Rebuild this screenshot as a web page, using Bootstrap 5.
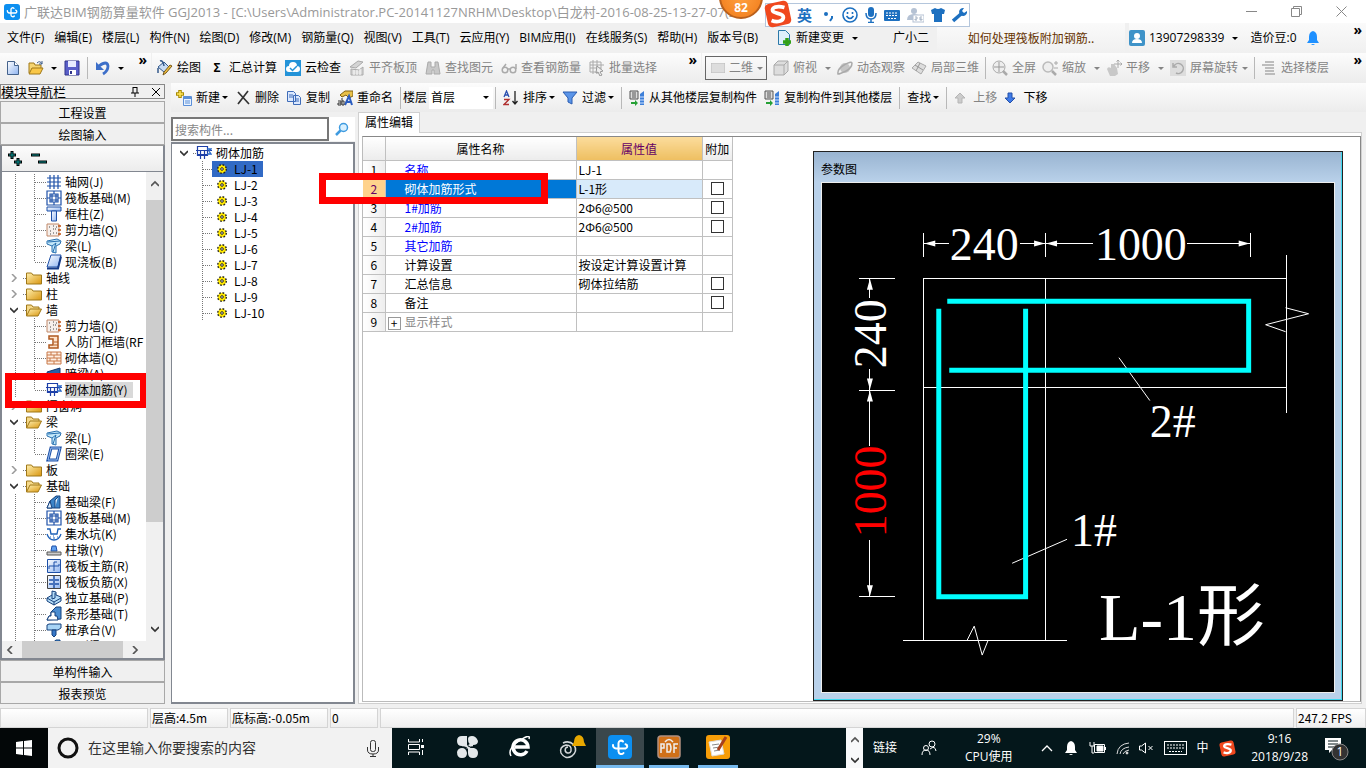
<!DOCTYPE html>
<html lang="zh-CN">
<head>
<meta charset="utf-8">
<meta name="viewport" content="width=device-width, initial-scale=1">
<title>广联达BIM钢筋算量软件 GGJ2013</title>
<link href="https://cdn.jsdelivr.net/npm/bootstrap@5.3.0/dist/css/bootstrap.min.css" rel="stylesheet">
<style>
:root{--ui:"Open Sans","Noto Sans CJK SC",sans-serif;--song:"Noto Sans CJK SC",sans-serif;--dots:repeating-linear-gradient(#777 0 1px,transparent 1px 2px);--dotsx:repeating-linear-gradient(90deg,#777 0 1px,transparent 1px 2px)}
body{height:100vh;font:12px/16px var(--ui);color:#000;background:#f0f0f0;overflow:hidden}
svg{display:block;flex:none}
.ic{width:16px;height:16px}
a{color:inherit;text-decoration:none}
.titlebar{height:23px;background:#fff;color:#999}
.titletext{font-size:13px;white-space:nowrap;flex:none}
.wctl{gap:34px;padding-right:19px}
.bare{border:0;background:none;padding:0;color:inherit;font:inherit;display:inline-flex;align-items:center;flex:none;border-radius:0}
.orb{width:44px;height:44px;left:719px;top:-25px;border-radius:50%;background:radial-gradient(#ffa040,#f07a18);border:2px solid #b9601c;color:#fff;font:bold 12px/18px var(--ui);z-index:3}
.ime{left:765px;top:3px;width:205px;height:24px;background:#fff;border:1px solid #b4c6dc;z-index:2;color:#1d70c0;padding-left:31px;gap:7px}
.ime b{font-size:15px;margin-right:2px}
.imelogo{position:absolute;left:-2px;top:-4px}
.menubar{height:30px}
.menus{gap:10px;padding-left:7px;width:937px}
.band{background:linear-gradient(#fafafa,#f0f0f0)}
.news{width:188px;color:#630;font-family:var(--song)}
.toolbar1{height:30px;gap:1px}
.tb{background:linear-gradient(#fcfcfc,#ececec)}
.tbx{gap:4px;line-height:16px;font-size:12px;white-space:nowrap}
.tbx:disabled{color:#848484;opacity:1;border:0}
.caret{width:0;height:0;border:3px solid transparent;border-top-color:currentColor;border-bottom:0;flex:none}
.vsep{width:1px;height:22px;background:#b8b8b8;flex:none}
.more{font:bold 14px/14px var(--ui);align-self:flex-start;padding-right:4px;color:#000}
.viewbox{width:62px;height:24px;border:1px solid #666;color:#848484;padding:0 5px;gap:4px;white-space:nowrap}
.toolbar2{height:29px;gap:7px;padding-left:5px;margin-left:6px}
.toolbar2 .tbx .caret{margin-left:-2px}
.floor{width:64px;height:22px;border:0;background:#fff;appearance:none;padding:0 2px;font:12px/20px var(--ui)}
.dock{width:165px}
.dockhead{height:15px;border:1px solid #888;font:13px/12px var(--song);margin:1px 0 2px}
.dockbtn{height:22px;border:1px solid #fff;border-right-color:#999;border-bottom-color:#999;border-radius:0;padding:0;font:12px/19px var(--song);background:#f0f0f0;width:100%;flex:none;outline:1px solid #a8a8a8;outline-offset:-1px}
.navbox{border:2px solid #828790;border-top:1px solid #999;background:#fff;min-height:0}
.navtools{height:26px;border-bottom:1px solid #828790;gap:8px;padding-left:5px;background:linear-gradient(#fcfcfc,#ececec)}
.tree{font:12px/16px var(--song);margin:0;padding:2px 0 0;list-style:none;min-height:0}
.tree li{height:16px;display:flex;align-items:center;white-space:nowrap;gap:3px;position:relative}
.tree .lf{padding-left:44px;background:var(--dots) 13px 0/1px 100% no-repeat,var(--dots) 32px 0/1px 100% no-repeat,var(--dotsx) 33px 8px/11px 1px no-repeat}
.tree .endrow{background:var(--dots) 13px 0/1px 100% no-repeat,var(--dots) 32px 0/1px 8px no-repeat,var(--dotsx) 33px 8px/11px 1px no-repeat}
.tree .fd{padding-left:8px;gap:4px;background:var(--dotsx) 21px 8px/4px 1px no-repeat}
.fd .chev{margin-right:4px}
.chev{width:8px;height:8px}
.picked{background:#d9d9d9;padding-right:5px}
.callout1{border:7px solid red;position:absolute;z-index:4;pointer-events:none}
.mark-nav{left:3px;top:-9px;width:142px;height:35px}
.mark-row{left:-44px;top:-7px;width:229px;height:31px;background:linear-gradient(90deg,#fff 37px,transparent 37px)}
.sbar{width:17px;background:#f0f0f0}
.thumb{background:#cdcdcd}
.comp{width:184px;margin:0 3px 0 6px}
.searchrow{padding:5px 0 1px}
.searchbox{border:2px solid #777;border-radius:0;padding:0 2px;font:12px/20px var(--song);height:24px;width:158px}
.searchbox::placeholder{color:#888}
.complist{border:1px solid #828790;border-top-width:2px;border-right-width:2px;border-bottom-width:2px;background:#fff}
.complist .tree{padding-top:1px}
.cl{padding-left:43px;background:var(--dots) 30px 0/1px 100% no-repeat,var(--dotsx) 31px 8px/10px 1px no-repeat}
.cl svg{width:12px;height:12px}
.cl a{display:flex;gap:6px;align-items:center;padding:0 5px 0 4px;margin-left:-3px}
.cl.on a{background:#316ac5}
.ptab{height:21px;width:62px;background:#fff;border:1px solid #d0d0d0;border-bottom:0;font-size:12px;padding-left:6px;margin-bottom:-1px;z-index:1;position:relative}
.page{background:#fff;border:1px solid #d0d0d0;padding:3px 0 1px 3px;margin-right:4px;min-height:0}
.inner{border:1px solid #888;border-left-color:#bbb;border-bottom-color:#bbb}
.props{width:370px;table-layout:fixed;border-collapse:collapse;font:12px/17px var(--song);flex:none;align-self:flex-start}
.props td,.props th{border:1px solid #c0c0c0;border-left-width:0;height:19px;padding:0 2px;white-space:nowrap;font-weight:400}
.props thead th{height:23px;text-align:center;border-top:0;background:linear-gradient(#fff,#ececec);padding:0}
.props thead th.hot{background:linear-gradient(#fbdc9c,#eebf61);color:#606}
.props tbody th{text-align:center;background:linear-gradient(90deg,#fff,#eee);padding:0}
.props td:nth-child(2){padding-left:19px}
.props td:last-child{text-align:center}
.props .blue{color:#00f}
.props .faint{color:#888}
.props .cur td:nth-child(2){background:#0078d7;color:#fff}
.props .cur td:nth-child(3){background:#d8eafa}
.props .cur th{background:#ffd28c;color:#606}
.tick{appearance:none;width:13px;height:13px;border:1px solid #333;background:#fff;display:block;margin:0 auto}
.plus{border:1px solid #999;width:13px;height:13px;line-height:10px;text-align:center;display:inline-block;margin:0 4px 0 -17px;vertical-align:middle}
.pwin{flex:0 0 530px;margin:14px 17px 0 auto;border:1px solid #222;background:linear-gradient(#99b4d1,#b9d1ea 30px);box-shadow:inset -1px -1px #3fd8f0;padding:0 7px 7px 7px}
.pwin h2{font:12px/16px var(--ui);margin:0;padding:10px 0 4px}
.canvas{background:#000;border:1px solid #eee;min-height:0}
.canvas svg{width:100%;height:100%}
.status{height:20px;gap:2px;font:12px/16px var(--song);background:#f0f0f0}
.cell{border:1px solid #d4d4d4;background:linear-gradient(#fff,#efefef);padding:1px 1px 0;white-space:nowrap}
.taskbar{height:40px;background:#04171b;color:#fff}
.start{width:48px;background:#030708;justify-content:center}
.wsearch{width:344px;background:#f2f2f2;color:#222;padding:0 12px 0 9px;gap:9px}
.wsearch input{border:0;background:none;font:14px/20px var(--ui);min-width:0;padding:0}
.wsearch input::placeholder{color:#333;opacity:1}
.app{width:48px;height:40px;justify-content:center;border-bottom:3px solid transparent}
.app.run{border-color:#76b9ed;width:40px;margin:0 4px 0 5px}
.app.act{background:#3a474b;border-color:#76b9ed}
.tray{gap:10px}
.two{line-height:18px;text-align:center}
</style>
</head>
<body class="d-flex flex-column">
<svg width="0" height="0" class="position-absolute" aria-hidden="true">
<defs>
<linearGradient id="gy" x1="0" y1="0" x2="1" y2="1"><stop offset="0" stop-color="#fff0b0"/><stop offset="1" stop-color="#d9960f"/></linearGradient>
<linearGradient id="gb" x1="0" y1="0" x2="1" y2="1"><stop offset="0" stop-color="#fff"/><stop offset="1" stop-color="#8fb4f0"/></linearGradient>
</defs>
<symbol id="logo" viewBox="0 0 24 24"><rect width="24" height="24" rx="4" fill="#0c8ff0"/><path d="M15 6.500a2.600 2.600 0 0 0-4.500 1.500v8.500a2.800 2.800 0 0 0 5 1.500M5 10a3.200 3.200 0 0 0 3 3.500h9.500a2.200 2.200 0 0 0 0-4.300" fill="none" stroke="#fff" stroke-width="2" stroke-linecap="round"/></symbol>
<symbol id="sogou" viewBox="0 0 26 26"><rect x="2" y="2" width="22" height="22" rx="4" fill="#f0481e" transform="rotate(-12 13 13)"/><path d="M19 7C12 5 7 7 8 10s10 2 10 6-6 5-11 3" fill="none" stroke="#fff" stroke-width="3.500"/></symbol>
<symbol id="new" viewBox="0 0 16 16"><path d="M2.500 1.500h7l4 4v9h-11z" fill="url(#gb)" stroke="#44628c"/><path d="M9.500 1.500v4h4" fill="#fff" stroke="#44628c"/></symbol>
<symbol id="open" viewBox="0 0 16 16"><path d="M1 13V3h5l1 2h6v3" fill="#f5d471" stroke="#a07818"/><path d="M1 14l3-6h11l-3 6z" fill="#f9c748" stroke="#a07818"/><path d="M9 3q3-3 5 1m0-3v3h-3" fill="none" stroke="#3d5c8a"/></symbol>
<symbol id="save" viewBox="0 0 16 16"><path d="M1 1h14v14H1z" fill="#5a5fc8" stroke="#31358a"/><path d="M4 1h8v6H4z" fill="#e8ecff"/><path d="M5 10h7v5H5z" fill="#fff"/><path d="M6 11h2v3H6z" fill="#31358a"/></symbol>
<symbol id="undo" viewBox="0 0 16 16"><path d="M4 6q8-6 9 0 0 5-5 8" fill="none" stroke="#3d6fc9" stroke-width="2.800"/><path d="M1 2v8h8z" fill="#3d6fc9"/></symbol>
<symbol id="paint" viewBox="0 0 16 16"><path d="M1 7l6-5 6 6-6 4z" fill="#c8dcf5" stroke="#345a8c"/><path d="M3 1q3-1 4 5M1 8v5" fill="none" stroke="#345a8c" stroke-width="1.500"/><path d="M15 6l-6 7-3 2 1-3 6-7z" fill="#f0c040" stroke="#78581a"/></symbol>
<symbol id="cloud" viewBox="0 0 16 16"><rect width="16" height="16" fill="#2393d8"/><path d="M4 12a3 3 0 0 1 0-6 4 4 0 0 1 8 0 3 3 0 0 1 0 6z" fill="#fff"/><path d="M5 8l2.500 2.500L12 6" fill="none" stroke="#2393d8" stroke-width="1.500"/></symbol>
<symbol id="align" viewBox="0 0 16 16"><path d="M1 7l8-6 5 1-7 6zM2 9v6h12V7l-4 3z" fill="#d4d4d4" stroke="#aaa"/><path d="M5 10v5M8 10v5M11 9v6" stroke="#fff"/></symbol>
<symbol id="bino" viewBox="0 0 16 16"><path d="M3 2h3v5h4V2h3l2 12H9v-4H7v4H1z" fill="#c8c8c8" stroke="#aaa"/></symbol>
<symbol id="glass" viewBox="0 0 16 16"><g fill="none" stroke="#aaa" stroke-width="1.500"><circle cx="4" cy="10" r="2.800"/><circle cx="12" cy="10" r="2.800"/><path d="M7 9h2M2 8l3-4M15 9V4"/></g></symbol>
<symbol id="batch" viewBox="0 0 16 16"><path d="M1 2h11v10H1zM1 5h14M1 8h11M4 0v14M8 0v14" fill="none" stroke="#aaa"/><path d="M8 6l6 5-3 1 2 3-2 1-2-4-2 1z" fill="#eee" stroke="#999"/></symbol>
<symbol id="cube" viewBox="0 0 16 16"><path d="M1 5l4-4h10v10l-4 4H1zM1 5h10v10M11 5l4-4" fill="#ddd" stroke="#aaa"/></symbol>
<symbol id="orbit" viewBox="0 0 16 16"><circle cx="8" cy="8" r="5" fill="#c5c5c5"/><path d="M1 14Q0 9 7 5t8-2q0 5-6 8t-8 3z" fill="none" stroke="#aaa" stroke-width="1.500"/></symbol>
<symbol id="part" viewBox="0 0 16 16"><path d="M1 8l6-6 8 4-5 8z" fill="#ddd" stroke="#aaa"/><path d="M4 5l8 5M9 3L5 11" stroke="#999"/></symbol>
<symbol id="full" viewBox="0 0 16 16"><circle cx="7" cy="7" r="6" fill="#eee" stroke="#aaa"/><path d="M7 2v10M2 7h10" stroke="#999"/><path d="M11 11l4 4" stroke="#aaa" stroke-width="2.500"/></symbol>
<symbol id="zoomg" viewBox="0 0 16 16"><circle cx="6" cy="7" r="5" fill="#eee" stroke="#bbb" stroke-width="1.500"/><path d="M10 11l4 4" stroke="#aaa" stroke-width="2.500"/><path d="M12 3h4M14 1v4M12 8h4" stroke="#aaa"/></symbol>
<symbol id="pan" viewBox="0 0 16 16"><path d="M1 9q1-3 4-1V4h3l3 4 1 6-3 2H4z" fill="#c8c8c8"/><path d="M12 0v8M8 4h8M10.500 1.500L12 0l1.500 1.500M14.500 2.500L16 4l-1.500 1.500" fill="none" stroke="#aaa"/></symbol>
<symbol id="rot" viewBox="0 0 16 16"><rect width="16" height="16" fill="#ddd"/><path d="M4 6a5 5 0 1 1 2 7M3 3v4h4" fill="none" stroke="#aaa" stroke-width="1.500"/></symbol>
<symbol id="layers" viewBox="0 0 16 16"><path d="M4 2h9M1 5h12M4 8h9M4 11h9M4 14h10" stroke="#aaa" stroke-width="1.500"/></symbol>
<symbol id="add" viewBox="0 0 16 16"><path d="M4 0v8M0 4h8" stroke="#a88a00" stroke-width="3.500"/><path d="M4 1v6M1 4h6" stroke="#ffe658" stroke-width="1.500"/><path d="M7.500 6.500h8v9h-8z" fill="#e8f2ff" stroke="#5a8fd8"/><path d="M8 8h7" stroke="#5a8fd8" stroke-width="2"/><path d="M9 11h5M9 13h5" stroke="#5a8fd8"/></symbol>
<symbol id="del" viewBox="0 0 16 16"><path d="M3 2l11 12M13 1L3 14" stroke="#333" stroke-width="1.700"/></symbol>
<symbol id="copy" viewBox="0 0 16 16"><path d="M1.500 1.500h6l2 2v8h-8zM7.500 5.500h5l2 2v7h-7z" fill="#dce9ff" stroke="#3f6cb8"/><path d="M3 5h4M3 7h4M9 9h4M9 11h4" stroke="#3f6cb8"/></symbol>
<symbol id="ren" viewBox="0 0 16 16"><path d="M3 5l5-4 8 0v5l-4 2-3-3-4 2z" fill="#e8c048" stroke="#806010"/><path d="M8 15l4-9 3 9M9 12h5" fill="none" stroke="#2a5cc0" stroke-width="2"/><path d="M1 11h3v4H1v-2h3M5 8v7h2v-4H5" fill="none" stroke="#333"/></symbol>
<symbol id="az" viewBox="0 0 16 16"><path d="M1 7l2.500-6L6 7M2 5h3" fill="none" stroke="#2a4fb0" stroke-width="1.300"/><path d="M1 9.500h5l-5 5h5" fill="none" stroke="#b03030" stroke-width="1.300"/><path d="M12 1v12M9.500 11l2.500 3 2.500-3" fill="none" stroke="#222" stroke-width="1.300"/></symbol>
<symbol id="funnel" viewBox="0 0 16 16"><path d="M1 2h14l-5 6v6l-4-2V8z" fill="#5a94e8" stroke="#2a5cb0"/></symbol>
<symbol id="bld" viewBox="0 0 16 16"><path d="M1 1h8v8H1z" fill="#ddd" stroke="#555"/><path d="M3 3h4M3 5h4M3 7h4" stroke="#555"/><path d="M11 4l4-3v14h-4z" fill="#3d7fd8"/><path d="M11 7h4M11 10h4M11 13h4" stroke="#cfe2ff"/><path d="M2 12h4v-2l3 3-3 3v-2H2z" fill="#25a035"/></symbol>
<symbol id="up" viewBox="0 0 12 12"><path d="M6 1l5 5H8v5H4V6H1z" fill="#ccc" stroke="#b5b5b5"/></symbol>
<symbol id="down" viewBox="0 0 12 12"><path d="M6 11l5-5H8V1H4v5H1z" fill="#3f7be8" stroke="#2450a8"/></symbol>
<symbol id="pgreen" viewBox="0 0 16 16"><path d="M2.500.5h7l4 4v10h-11z" fill="#dff0fb" stroke="#2a78a8"/><path d="M11 8v8M7 12h8" stroke="#32a018" stroke-width="3.500"/></symbol>
<symbol id="user" viewBox="0 0 16 16"><rect width="16" height="16" rx="2" fill="#3f93c8"/><circle cx="8" cy="6" r="3" fill="#fff"/><path d="M3 13q0-4 5-4t5 4z" fill="#fff"/></symbol>
<symbol id="bell" viewBox="0 0 16 16"><path d="M8 1q4 1 4 6v3l2 3H2l2-3V7q0-5 4-6zM6 14h4q-2 2-4 0z" fill="currentColor"/></symbol>
<symbol id="grid" viewBox="0 0 16 16"><path d="M1 4h14M1 8h14M1 12h14M4 1v14M8 1v14M12 1v14" stroke="#1d50a8" stroke-width="1.200"/></symbol>
<symbol id="raft" viewBox="0 0 16 16"><path d="M1 1h14v14H1zM4 4h8v8H4zM6 4v8M10 4v8M4 6h8M4 10h8M8 1v3M8 12v3M1 8h3M12 8h3" fill="none" stroke="#1d50a8" stroke-width="1.200"/></symbol>
<symbol id="colm" viewBox="0 0 16 16"><path d="M1 1h14v4H1z" fill="url(#gb)" stroke="#1d50a8"/><path d="M5.500 5h5v10h-5z" fill="url(#gb)" stroke="#1d50a8"/></symbol>
<symbol id="swall" viewBox="0 0 16 16"><path d="M1 2h12v12H1z" fill="#f6f0ec" stroke="#c08868"/><path d="M3 5h1M7 4h1M9 7h1M4 9h1M7 11h1M4 12h1M7 7h1M10 11h1M10 5h1" stroke="#444"/><path d="M12 4h3M12 8h3M12 12h3" stroke="#c05010" stroke-width="1.500"/></symbol>
<symbol id="beam" viewBox="0 0 16 16"><path d="M1 3l10-2 4 2-1 3-4 2v7l-4-1V8L1 6zM10 5L6 8" fill="#c4e8fa" stroke="#2870b0"/><path d="M2 4l12-1M7 14l3-9" stroke="#2870b0"/></symbol>
<symbol id="slab" viewBox="0 0 16 16"><path d="M5 1h10l-3 12H1z" fill="url(#gb)" stroke="#1d50a8"/><path d="M1 14.500h11l3-12" fill="none" stroke="#143a88" stroke-width="2"/></symbol>
<symbol id="ring" viewBox="0 0 16 16"><path d="M5 2h9l-3 12H2z" fill="#fff" stroke="#1d50a8" stroke-width="3"/><path d="M5 2h9l-3 12H2z" fill="none" stroke="#9cc0f0"/></symbol>
<symbol id="fold" viewBox="0 0 16 16"><path d="M.5 14V3h5l1.500 2h8.500v9z" fill="url(#gy)" stroke="#a07818"/></symbol>
<symbol id="foldo" viewBox="0 0 16 16"><path d="M.5 14V3h5l1.500 2h6v2" fill="#f5d98a" stroke="#a07818"/><path d="M.5 14L4 7h11.500L12 14z" fill="url(#gy)" stroke="#a07818"/></symbol>
<symbol id="door" viewBox="0 0 16 16"><path d="M3 2h9v12H3v-3h4V5H3z" fill="#ffe4cc" stroke="#b05a20" stroke-width="1.500"/><path d="M8 8h4M8 11h4" stroke="#b05a20"/></symbol>
<symbol id="brick" viewBox="0 0 16 16"><path d="M1 2h14v12H1zM1 5h14M1 8h14M1 11h14M5 2v3M11 2v3M8 5v3M4 8v3M11 8v3M8 11v3" fill="#ffefe2" stroke="#c87848"/></symbol>
<symbol id="dark" viewBox="0 0 16 16"><path d="M1 6l13-4v6L3 14z" fill="#2860a8" stroke="#123870"/></symbol>
<symbol id="tie" viewBox="0 0 16 16"><path d="M1.500 1.500h10v9h-10zM4.500 5v9M8.500 5v9M0 5.500h16M2 9.500h10" fill="none" stroke="#1d3fa8" stroke-width="1.200"/><path d="M11 4h4l-2 2 2 3h-4" fill="none" stroke="#2a68c8" stroke-width="1.300"/></symbol>
<symbol id="fbeam" viewBox="0 0 16 16"><path d="M1 14l3-7 6-5h4v12z" fill="#3c84c8" stroke="#15407c"/><path d="M1 14l3-7 2 7zM9 14V6l3-3" fill="#e0f0ff" stroke="#15407c"/></symbol>
<symbol id="sump" viewBox="0 0 16 16"><path d="M1 3h3l1 5h6l1-5h3M1 8q2 6 7 6t7-6" fill="none" stroke="#1d60b8" stroke-width="1.300"/><path d="M4 11h1M7 12h2M11 11h1M7 10h1" stroke="#1d60b8"/></symbol>
<symbol id="pier" viewBox="0 0 16 16"><path d="M5 9l1-5h4l1 5z" fill="#60a0f0" stroke="#1d50a8"/><path d="M1 10h14v3H1z" fill="#ccc" stroke="#555"/></symbol>
<symbol id="rein" viewBox="0 0 16 16"><path d="M1.500 1.500h13v13h-13z" fill="url(#gb)" stroke="#1d50a8"/><path d="M8 4v9M3 8h10V6M3 8v3M8 4h3" fill="none" stroke="#1d50a8"/></symbol>
<symbol id="rein2" viewBox="0 0 16 16"><path d="M1.500 1.500h13v13h-13z" fill="url(#gb)" stroke="#444"/><path d="M8 2v12M3 6h4M9 6h4M3 10h4M9 10h4" stroke="#1d50a8" stroke-width="1.500"/></symbol>
<symbol id="foot" viewBox="0 0 16 16"><path d="M1 8l5-3V1l4 1v3l5 2v4l-7 4-7-4z" fill="#b4dcf8" stroke="#15407c"/><path d="M1 8l7 4 7-4M8 12v3M6 5v4l3-1V3" fill="none" stroke="#15407c"/></symbol>
<symbol id="strip" viewBox="0 0 16 16"><path d="M1 14l2-4h2V6l5-5h5v12z" fill="#4a8cd0" stroke="#15407c"/><path d="M1 14l2-4h2V6h4v4h2l1 4z" fill="#fff" stroke="#15407c"/></symbol>
<symbol id="cap" viewBox="0 0 16 16"><path d="M1 3l2-1h12v4l-3 2H1z" fill="#a8d4f5" stroke="#15407c"/><path d="M6 8h4v5l-2 2-2-2z" fill="#3878c8" stroke="#15407c"/></symbol>
<symbol id="gear" viewBox="0 0 12 12"><circle cx="6" cy="6" r="4.300" fill="#ffe800" stroke="#222" stroke-width="1.400" stroke-dasharray="1.700 1.680"/><circle cx="6" cy="6" r="1.300" fill="#fff" stroke="#222"/></symbol>
<symbol id="cd" viewBox="0 0 8 8"><path d="M0 2l4 4 4-4" fill="none" stroke="#333" stroke-width="1.700"/></symbol>
<symbol id="cu" viewBox="0 0 8 8"><path d="M0 6l4-4 4 4" fill="none" stroke="#555" stroke-width="1.700"/></symbol>
<symbol id="cr" viewBox="0 0 8 8"><path d="M2 0l4 4-4 4" fill="none" stroke="#999" stroke-width="1.500"/></symbol>
<symbol id="crd" viewBox="0 0 8 8"><path d="M2 0l4 4-4 4" fill="none" stroke="#555" stroke-width="1.700"/></symbol>
<symbol id="clf" viewBox="0 0 8 8"><path d="M6 0L2 4l4 4" fill="none" stroke="#555" stroke-width="1.700"/></symbol>
</svg>

<header class="flex-shrink-0">
<div class="titlebar d-flex align-items-center position-relative">
<svg class="ic ms-1 me-1"><use href="#logo"/></svg>
<div class="titletext">广联达BIM钢筋算量软件 GGJ2013 - [C:\Users\Administrator.PC-20141127NRHM\Desktop\白龙村-2016-08-25-13-27-07(21</div>
<div class="orb position-absolute d-flex justify-content-center align-items-end">82</div>
<div class="ime position-absolute d-flex align-items-center">
<svg class="imelogo" width="28" height="28"><use href="#sogou"/></svg>
<b>英</b>
<svg width="14" height="16"><circle cx="5" cy="7" r="2" fill="#1d70c0"/><path d="M11 9v2l-2 3" stroke="#1d70c0" stroke-width="2" fill="none"/></svg>
<svg width="16" height="16" fill="none" stroke="#1d70c0" stroke-width="1.600"><circle cx="8" cy="8" r="7"/><path d="M4.500 9q3.500 5 7 0M5.500 5v2M10.500 5v2"/></svg>
<svg width="12" height="16"><rect x="3" y="0" width="6" height="10" rx="3" fill="#1d70c0"/><path d="M1 6q0 6 5 6t5-6M6 12v3M3 15.500h6" fill="none" stroke="#1d70c0" stroke-width="1.500"/></svg>
<svg width="16" height="16"><rect y="3" width="16" height="11" rx="1" fill="#1d70c0"/><path d="M2 6h12M2 8.500h12M4 11.500h8" stroke="#fff" stroke-dasharray="2 1"/></svg>
<svg width="17" height="16"><circle cx="7" cy="4" r="3" fill="#b5c2d4"/><path d="M0 13q0-6 7-6t7 6z" fill="#b5c2d4"/><rect x="6" y="8" width="11" height="7" fill="#fff" stroke="#b5c2d4"/><path d="M8 10h2v2H8v1h2M15 10h-2v3h2v-1h-2" fill="none" stroke="#a5b2c4"/></svg>
<svg width="14" height="16"><path d="M0 3l4-2q3 2 6 0l4 2-1 4h-2v8H3V7H1z" fill="#1d70c0"/></svg>
<svg width="15" height="16"><path d="M1 14L9 7" stroke="#1d70c0" stroke-width="3.500"/><path d="M12 1a4 4 0 1 0 3 3l-3 2-2-2z" fill="#1d70c0"/></svg>
</div>
<div class="wctl d-flex ms-auto align-items-center">
<button class="bare" aria-label="最小化"><svg width="11" height="11"><path d="M0 5.500h11" stroke="#888"/></svg></button>
<button class="bare" aria-label="还原"><svg width="11" height="11" fill="none" stroke="#888"><path d="M.5 2.500h8v8h-8zM2.500 2V.5h8v8H9"/></svg></button>
<button class="bare" aria-label="关闭"><svg width="11" height="11"><path d="M.5.5l10 10M10.500.5l-10 10" stroke="#888"/></svg></button>
</div>
</div>

<nav class="menubar d-flex">
<div class="menus d-flex align-items-center flex-shrink-0 text-nowrap">
<a href="#">文件(F)</a><a href="#">编辑(E)</a><a href="#">楼层(L)</a><a href="#">构件(N)</a><a href="#">绘图(D)</a><a href="#">修改(M)</a><a href="#">钢筋量(Q)</a><a href="#">视图(V)</a><a href="#">工具(T)</a><a href="#">云应用(Y)</a><a href="#">BIM应用(I)</a><a href="#">在线服务(S)</a><a href="#">帮助(H)</a><a href="#">版本号(B)</a>
<button class="bare tbx ms-2"><svg class="ic"><use href="#pgreen"/></svg>新建变更<span class="caret ms-1"></span></button>
<a href="#" class="ms-auto me-2">广小二</a>
</div>
<div class="news band d-flex align-items-center justify-content-center flex-shrink-0"><a href="#">如何处理筏板附加钢筋..</a></div>
<div class="band d-flex align-items-center flex-grow-1 ms-1">
<button class="bare tbx"><svg class="ic"><use href="#user"/></svg>13907298339<span class="caret mx-1"></span></button>
<span class="ms-2 me-2">造价豆:0</span>
<svg class="ic" style="color:#1e90ff"><use href="#bell"/></svg>
<span class="more ms-auto">»</span>
</div>
</nav>

<div class="toolbar1 d-flex">
<div class="tb d-flex align-items-center flex-shrink-0" style="width:151px;gap:7px;padding-left:5px">
<button class="bare" aria-label="新建"><svg class="ic"><use href="#new"/></svg></button>
<button class="bare" aria-label="打开"><svg class="ic"><use href="#open"/></svg></button><span class="caret"></span>
<button class="bare" aria-label="保存"><svg class="ic"><use href="#save"/></svg></button><span class="vsep"></span>
<button class="bare" aria-label="撤销"><svg class="ic"><use href="#undo"/></svg></button><span class="caret"></span>
<span class="more ms-auto">»</span>
</div>
<div class="tb d-flex align-items-center flex-shrink-0 gap-2" style="width:549px;padding-left:5px">
<button class="bare tbx"><svg class="ic"><use href="#paint"/></svg>绘图</button>
<button class="bare tbx"><b class="ic text-center">Σ</b>汇总计算</button>
<button class="bare tbx"><svg class="ic"><use href="#cloud"/></svg>云检查</button>
<button class="bare tbx" disabled><svg class="ic"><use href="#align"/></svg>平齐板顶</button>
<button class="bare tbx" disabled><svg class="ic"><use href="#bino"/></svg>查找图元</button>
<button class="bare tbx" disabled><svg class="ic"><use href="#glass"/></svg>查看钢筋量</button>
<button class="bare tbx" disabled><svg class="ic"><use href="#batch"/></svg>批量选择</button>
<span class="more ms-auto">»</span>
</div>
<div class="tb d-flex align-items-center flex-grow-1" style="gap:6px;padding-left:3px">
<button class="bare viewbox"><svg width="14" height="10"><rect width="14" height="10" fill="#ddd" stroke="#bbb"/></svg>二维<span class="caret ms-auto"></span></button>
<button class="bare tbx" disabled><svg class="ic"><use href="#cube"/></svg>俯视<span class="caret ms-1"></span></button>
<button class="bare tbx" disabled><svg class="ic"><use href="#orbit"/></svg>动态观察</button>
<button class="bare tbx" disabled><svg class="ic"><use href="#part"/></svg>局部三维</button><span class="vsep"></span>
<button class="bare tbx" disabled><svg class="ic"><use href="#full"/></svg>全屏</button>
<button class="bare tbx" disabled><svg class="ic"><use href="#zoomg"/></svg>缩放<span class="caret ms-1"></span></button>
<button class="bare tbx" disabled><svg class="ic"><use href="#pan"/></svg>平移<span class="caret ms-1"></span></button>
<button class="bare tbx" disabled><svg class="ic"><use href="#rot"/></svg>屏幕旋转<span class="caret"></span></button><span class="vsep"></span>
<button class="bare tbx" disabled><svg class="ic"><use href="#layers"/></svg>选择楼层</button>
<span class="more ms-auto">»</span>
</div>
</div>
</header>

<main class="d-flex flex-grow-1" style="min-height:0">
<aside class="dock d-flex flex-column flex-shrink-0">
<div class="dockhead d-flex align-items-center flex-shrink-0"><span>模块导航栏</span>
<svg class="ms-auto me-2" width="10" height="10"><path d="M3 0v6M7 0v6M3 .5h4M1 6h8M5 6v4" stroke="#000" fill="none"/></svg>
<svg class="mx-1" width="8" height="8"><path d="M0 0l8 8M8 0L0 8" stroke="#000"/></svg></div>
<button class="dockbtn">工程设置</button>
<button class="dockbtn">绘图输入</button>
<div class="navbox d-flex flex-column flex-grow-1">
<div class="navtools d-flex align-items-center flex-shrink-0">
<svg width="16" height="16"><path d="M5 0v8M1 4h8M11 7v8M7 11h8" stroke="#000" stroke-width="3"/><path d="M5 1v6M2 4h6M11 8v6M8 11h6" stroke="#089090"/></svg>
<svg width="16" height="16"><path d="M0 4h9M7 11h9" stroke="#000" stroke-width="3"/><path d="M1 4h7M8 11h7" stroke="#089090"/></svg>
</div>
<div class="d-flex flex-grow-1" style="min-height:0">
<div class="flex-grow-1 position-relative" style="min-width:0">
<ul class="tree h-100 overflow-hidden">
<li class="lf"><svg class="ic"><use href="#grid"/></svg>轴网(J)</li>
<li class="lf"><svg class="ic"><use href="#raft"/></svg>筏板基础(M)</li>
<li class="lf"><svg class="ic"><use href="#colm"/></svg>框柱(Z)</li>
<li class="lf"><svg class="ic"><use href="#swall"/></svg>剪力墙(Q)</li>
<li class="lf"><svg class="ic"><use href="#beam"/></svg>梁(L)</li>
<li class="lf endrow"><svg class="ic"><use href="#slab"/></svg>现浇板(B)</li>
<li class="fd"><svg class="chev"><use href="#cr"/></svg><svg class="ic"><use href="#fold"/></svg>轴线</li>
<li class="fd"><svg class="chev"><use href="#cr"/></svg><svg class="ic"><use href="#fold"/></svg>柱</li>
<li class="fd"><svg class="chev"><use href="#cd"/></svg><svg class="ic"><use href="#foldo"/></svg>墙</li>
<li class="lf"><svg class="ic"><use href="#swall"/></svg>剪力墙(Q)</li>
<li class="lf"><svg class="ic"><use href="#door"/></svg>人防门框墙(RF</li>
<li class="lf"><svg class="ic"><use href="#brick"/></svg>砌体墙(Q)</li>
<li class="lf"><svg class="ic"><use href="#dark"/></svg>暗梁(A)</li>
<li class="lf endrow"><svg class="ic"><use href="#tie"/></svg><span class="picked">砌体加筋(Y)</span><span class="callout1 mark-nav"></span></li>
<li class="fd"><svg class="chev"><use href="#cr"/></svg><svg class="ic"><use href="#fold"/></svg>门窗洞</li>
<li class="fd"><svg class="chev"><use href="#cd"/></svg><svg class="ic"><use href="#foldo"/></svg>梁</li>
<li class="lf"><svg class="ic"><use href="#beam"/></svg>梁(L)</li>
<li class="lf endrow"><svg class="ic"><use href="#ring"/></svg>圈梁(E)</li>
<li class="fd"><svg class="chev"><use href="#cr"/></svg><svg class="ic"><use href="#fold"/></svg>板</li>
<li class="fd"><svg class="chev"><use href="#cd"/></svg><svg class="ic"><use href="#foldo"/></svg>基础</li>
<li class="lf"><svg class="ic"><use href="#fbeam"/></svg>基础梁(F)</li>
<li class="lf"><svg class="ic"><use href="#raft"/></svg>筏板基础(M)</li>
<li class="lf"><svg class="ic"><use href="#sump"/></svg>集水坑(K)</li>
<li class="lf"><svg class="ic"><use href="#pier"/></svg>柱墩(Y)</li>
<li class="lf"><svg class="ic"><use href="#rein"/></svg>筏板主筋(R)</li>
<li class="lf"><svg class="ic"><use href="#rein2"/></svg>筏板负筋(X)</li>
<li class="lf"><svg class="ic"><use href="#foot"/></svg>独立基础(P)</li>
<li class="lf"><svg class="ic"><use href="#strip"/></svg>条形基础(T)</li>
<li class="lf"><svg class="ic"><use href="#cap"/></svg>桩承台(V)</li>
<li class="lf"><svg class="ic"><use href="#fbeam"/></svg>异形梁(W)</li>
</ul>
</div>
<div class="sbar d-flex flex-column align-items-center flex-shrink-0 py-2">
<svg class="chev mb-2"><use href="#cu"/></svg><span class="thumb mt-1 w-100" style="height:71%"></span><svg class="chev mt-auto"><use href="#cd"/></svg>
</div>
</div>
<div class="d-flex align-items-center flex-shrink-0 sbar w-100 px-1" style="height:17px">
<svg class="chev me-2"><use href="#clf"/></svg><span class="thumb h-100" style="width:66%"></span><svg class="chev ms-2"><use href="#crd"/></svg>
</div>
</div>
<button class="dockbtn">单构件输入</button>
<button class="dockbtn mb-1">报表预览</button>
</aside>

<section class="d-flex flex-column flex-grow-1" style="min-width:0">
<div class="toolbar2 tb d-flex align-items-center flex-shrink-0">
<button class="bare tbx"><svg class="ic"><use href="#add"/></svg>新建<span class="caret"></span></button>
<button class="bare tbx"><svg class="ic"><use href="#del"/></svg>删除</button>
<button class="bare tbx"><svg class="ic"><use href="#copy"/></svg>复制</button>
<button class="bare tbx"><svg class="ic"><use href="#ren"/></svg>重命名</button>
<div class="d-flex align-items-center" style="gap:2px"><span class="vsep"></span><label for="floor" class="text-nowrap">楼层</label>
<div class="position-relative d-flex align-items-center"><select id="floor" class="floor"><option>首层</option></select><span class="caret position-absolute end-0 me-1"></span></div><span class="vsep"></span></div>
<button class="bare tbx"><svg class="ic"><use href="#az"/></svg>排序<span class="caret"></span></button>
<button class="bare tbx"><svg class="ic"><use href="#funnel"/></svg>过滤<span class="caret"></span></button><span class="vsep"></span>
<button class="bare tbx"><svg class="ic"><use href="#bld"/></svg>从其他楼层复制构件</button>
<button class="bare tbx"><svg class="ic"><use href="#bld"/></svg>复制构件到其他楼层</button><span class="vsep"></span>
<button class="bare tbx">查找<span class="caret"></span></button><span class="vsep"></span>
<button class="bare tbx" disabled><svg width="12" height="12"><use href="#up"/></svg>&nbsp;上移</button>
<button class="bare tbx"><svg width="12" height="12"><use href="#down"/></svg>&nbsp;下移</button>
</div>
<div class="d-flex flex-grow-1" style="min-height:0">
<div class="comp d-flex flex-column flex-shrink-0 mb-1">
<div class="searchrow d-flex">
<input class="searchbox" type="text" placeholder="搜索构件..." aria-label="搜索构件">
<button class="bare flex-grow-1 justify-content-center bg-white" aria-label="搜索"><svg width="14" height="14"><circle cx="8.500" cy="5.500" r="4" fill="#d8f0ff" stroke="#3f9be0" stroke-width="1.500"/><path d="M5.500 8.500L1 13" stroke="#3f9be0" stroke-width="2.500"/></svg></button>
</div>
<div class="complist flex-grow-1">
<ul class="tree">
<li class="fd"><svg class="chev"><use href="#cd"/></svg><svg class="ic"><use href="#tie"/></svg>砌体加筋</li>
<li class="cl on"><a href="#"><svg><use href="#gear"/></svg>LJ-1</a></li>
<li class="cl"><a href="#"><svg><use href="#gear"/></svg>LJ-2</a></li>
<li class="cl"><a href="#"><svg><use href="#gear"/></svg>LJ-3</a></li>
<li class="cl"><a href="#"><svg><use href="#gear"/></svg>LJ-4</a></li>
<li class="cl"><a href="#"><svg><use href="#gear"/></svg>LJ-5</a></li>
<li class="cl"><a href="#"><svg><use href="#gear"/></svg>LJ-6</a></li>
<li class="cl"><a href="#"><svg><use href="#gear"/></svg>LJ-7</a></li>
<li class="cl"><a href="#"><svg><use href="#gear"/></svg>LJ-8</a></li>
<li class="cl"><a href="#"><svg><use href="#gear"/></svg>LJ-9</a></li>
<li class="cl"><a href="#"><svg><use href="#gear"/></svg>LJ-10</a></li>
</ul>
</div>
</div>
<div class="d-flex flex-column flex-grow-1" style="min-width:0">
<div class="ptab d-flex align-items-center flex-shrink-0">属性编辑</div>
<div class="page d-flex flex-grow-1 mb-1">
<div class="inner d-flex flex-grow-1">
<table class="props">
<colgroup><col style="width:22px"><col style="width:191px"><col style="width:126px"><col></colgroup>
<thead><tr><th></th><th>属性名称</th><th class="hot">属性值</th><th>附加</th></tr></thead>
<tbody>
<tr><th>1</th><td class="blue">名称</td><td>LJ-1</td><td></td></tr>
<tr class="cur"><th class="position-relative">2<span class="callout1 mark-row"></span></th><td>砌体加筋形式</td><td>L-1形</td><td><input type="checkbox" class="tick" aria-label="附加 砌体加筋形式"></td></tr>
<tr><th>3</th><td class="blue">1#加筋</td><td>2Ф6@500</td><td><input type="checkbox" class="tick" aria-label="附加 1#加筋"></td></tr>
<tr><th>4</th><td class="blue">2#加筋</td><td>2Ф6@500</td><td><input type="checkbox" class="tick" aria-label="附加 2#加筋"></td></tr>
<tr><th>5</th><td class="blue">其它加筋</td><td></td><td></td></tr>
<tr><th>6</th><td>计算设置</td><td>按设定计算设置计算</td><td></td></tr>
<tr><th>7</th><td>汇总信息</td><td>砌体拉结筋</td><td><input type="checkbox" class="tick" aria-label="附加 汇总信息"></td></tr>
<tr><th>8</th><td>备注</td><td></td><td><input type="checkbox" class="tick" aria-label="附加 备注"></td></tr>
<tr><th>9</th><td class="faint"><span class="plus text-black">+</span>显示样式</td><td></td><td></td></tr>
</tbody>
</table>
<div class="pwin d-flex flex-column">
<h2>参数图</h2>
<div class="canvas flex-grow-1">
<svg viewBox="823 183 512 510" fill="none" stroke="#fff" font-family="'Liberation Serif','Noto Sans CJK SC',serif" font-size="46">
<g shape-rendering="crispEdges">
<path d="M924.500 233v24M1046.500 233v24M1251.500 233v24M924 243.500h26M1021 243.500h25M1046 243.500h48M1188 243.500h63"/>
<path d="M860 278.500h36M860 390.500h36M860 597.500h36M870.500 278v20M870.500 369v78M870.500 541v57"/>
<path d="M924.500 641V278.500h363M1046.500 278v363M924 387.500h363M1287.500 255v158M904 641.500h164"/>
</g>
<path d="M1287 308l23 6-43 11 20 7M968 641l7-14 8 29 6-15M1120 358l31 43M1013 564l55-24"/>
<path fill="#fff" stroke="none" d="M925 243.500l11-3v6zM1046 243.500l-11-3v6zM1047 243.500l11-3v6zM1251 243.500l-11-3v6zM870.500 279l-3 11h6zM870.500 390l-3-11h6zM870.500 391l-3 11h6zM870.500 597l-3-11h6z"/>
<path stroke="#0ff" stroke-width="5" d="M948 301.500h302v69H950M939.500 309v288.500h87V309"/>
<g fill="#fff" stroke="none">
<text x="985" y="260" text-anchor="middle">240</text>
<text x="1142" y="260" text-anchor="middle">1000</text>
<text x="1151" y="438">2#</text>
<text x="1072" y="547">1#</text>
<text transform="translate(887 334) rotate(-90)" text-anchor="middle">240</text>
<text transform="translate(887 492) rotate(-90)" text-anchor="middle" fill="red">1000</text>
<text x="1100" y="641" font-size="68">L-1形</text>
</g>
</svg>
</div>
</div>
</div>
</div>
</div>
</div>
</section>
</main>

<div class="status d-flex flex-shrink-0">
<div class="cell" style="width:148px"></div><div class="cell" style="width:78px">层高:4.5m</div><div class="cell" style="width:98px">底标高:-0.05m</div><div class="cell" style="width:48px">0</div><div class="cell flex-grow-1"></div><div class="cell" style="width:70px">247.2 FPS</div>
</div>

<footer class="taskbar d-flex align-items-center flex-shrink-0">
<button class="bare start h-100" aria-label="开始"><svg width="16" height="16" fill="#fff"><path d="M0 2l7-1v6.500H0zM8 1l8-1v7.500H8zM0 8.500h7V15l-7-1zM8 8.500h8V16l-8-1z"/></svg></button>
<div class="wsearch d-flex align-items-center h-100 flex-shrink-0">
<svg width="22" height="22"><circle cx="11" cy="11" r="9" fill="none" stroke="#111" stroke-width="3"/></svg>
<input type="text" class="flex-grow-1" placeholder="在这里输入你要搜索的内容" aria-label="搜索">
<svg width="14" height="18" fill="none" stroke="#333"><rect x="4.500" y="1.500" width="5" height="11" rx="2"/><path d="M1.500 8v3q0 4 5.500 4t5.500-4V8M7 15v3M4 17.500h6"/></svg>
</div>
<button class="bare app" aria-label="任务视图"><svg width="18" height="16" fill="none" stroke="#fff"><path d="M1.500 0v3h11V0M1.500 16v-3h11v3M1.500 5.500h11v5h-11zM15.500 0v3M15.500 11v5"/><path d="M14 6h3v3h-3z" fill="#fff" stroke="none"/></svg></button>
<button class="bare app ms-1" aria-label="浏览器"><svg width="22" height="22" fill="#e4e8ea"><path d="M5 0h5v10H5Q0 10 0 5t5-5zM11 3q0-3 4-3t6 5q0 4-5 4-5 0-5-6zM11 12h6q4 1 4 5 0 5-5 5t-5-5zM0 16q1-4 5-4t5 5q0 5-5 5t-5-6z"/><path d="M5 9q6 0 6 4M16 9q-5 0-5 4" stroke="#e4e8ea" stroke-width="3" fill="none"/><path d="M10.500 0v8q0 3 3 3h8M10.500 22v-8q0-3-3-3H0" fill="none" stroke="#04171b"/></svg></button>
<button class="bare app ms-1" aria-label="Internet Explorer"><svg width="22" height="22" fill="none" stroke="#fff"><path d="M18 15a7.500 7.500 0 1 1 1-4H6" stroke-width="3.500"/><path d="M2 20Q-2 13 10 5T20 3" stroke-width="1.500"/></svg></button>
<button class="bare app ms-1" aria-label="助手"><svg width="28" height="26"><path d="M10 13a3 3 0 1 0 3 4q1-6-5-6-7 2-5 8 4 7 11 3 6-5 2-11-5-5-11-2" fill="none" stroke="#d4d8da" stroke-width="1.500"/><path d="M21 1q5 1 5 7l2 4H14l2-4q0-6 5-7z" fill="#e8a800"/></svg></button>
<button class="bare app act" aria-label="广联达"><svg width="24" height="24"><use href="#logo"/></svg></button>
<button class="bare app run" aria-label="PDF"><svg width="24" height="24"><rect x="1" y="1" width="22" height="22" rx="3" fill="#d07018" stroke="#b09080" stroke-width="1.500"/><path d="M4 18V9h3v4H4M10 9h3q2 4 0 8h-3zM17 18V9h4M17 13h3M8 7q4-5 8 0" fill="none" stroke="#eee" stroke-width="1.500"/></svg></button>
<button class="bare app run" aria-label="画图"><svg width="24" height="24"><rect width="24" height="24" rx="3" fill="#f79d08"/><path d="M3 7l12-2 3 14-12 2z" fill="#fff" stroke="#ddd"/><path d="M6 10l7-1M7 13l7-1M8 16l6-1" stroke="#888"/><path d="M20 2l-8 13" stroke="#a8401c" stroke-width="3"/></svg></button>
<div class="ms-auto d-flex align-items-center h-100" style="width:520px">
<div class="h-100 bg-light d-flex flex-column justify-content-between align-items-center py-1" style="width:17px"><svg class="chev mt-1"><use href="#cu"/></svg><svg class="chev"><use href="#cd"/></svg></div>
<span style="margin-left:10px;width:48px">链接</span>
<svg width="16" height="16" fill="none" stroke="#fff"><circle cx="11" cy="4" r="3"/><circle cx="5" cy="8" r="2.500"/><path d="M1 15q0-5 4-5t4 5M9 9q5-4 6 2"/></svg>
<span class="two mx-4 px-1">29%<br>CPU使用</span>
<div class="tray d-flex align-items-center">
<svg width="12" height="8"><path d="M1 7l5-5 5 5" fill="none" stroke="#fff" stroke-width="1.300"/></svg>
<svg width="16" height="16"><use href="#bell"/></svg>
<svg width="17" height="14" fill="none" stroke="#fff"><path d="M5.500 3.500h10v8h-10zM16.500 6v3M1 1v4h4V1M3 5v7h2"/><path d="M8 5h6v5H8z" fill="#fff"/></svg>
<svg width="13" height="14" fill="none" stroke="#ddd"><path d="M1 13Q2 3 13 2M4 13q1-6 9-7M7 13q1-3 6-4"/><circle cx="11" cy="12" r="1" fill="#fff"/></svg>
<svg width="15" height="12" fill="none" stroke="#fff"><path d="M.5 4v4h2l4 3V1l-4 3zM9.500 4l4 4M13.500 4l-4 4"/></svg>
<svg width="23" height="14"><rect x=".5" y=".5" width="22" height="13" fill="none" stroke="#fff"/><path d="M3 4h17M3 7h17M5 10.500h13" stroke="#fff" stroke-dasharray="2 1"/></svg>
<span>中</span>
<svg width="17" height="17"><use href="#sogou"/></svg>
</div>
<span class="two ms-auto">9:16<br>2018/9/28</span>
<svg class="mx-3" width="26" height="26"><path d="M1 3h16v12H8l-3 3v-3H1z" fill="#fff"/><path d="M4 6h10M4 9h10M4 12h6" stroke="#04171b"/><circle cx="16" cy="17" r="8" fill="#333" stroke="#888"/><text x="16" y="21" fill="#fff" font-size="12" text-anchor="middle">1</text></svg>
</div>
</footer>
<script src="https://cdn.jsdelivr.net/npm/bootstrap@5.3.0/dist/js/bootstrap.bundle.min.js"></script>
</body>
</html>
